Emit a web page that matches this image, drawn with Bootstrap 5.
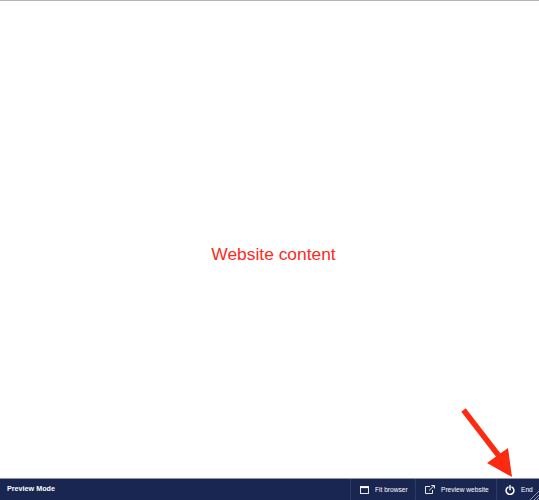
<!DOCTYPE html>
<html lang="en">
<head>
<meta charset="utf-8">
<title>Preview Mode</title>
<link href="https://cdn.jsdelivr.net/npm/bootstrap@5.3.0/dist/css/bootstrap.min.css" rel="stylesheet">
<style>
html,body{height:100%;margin:0;overflow:hidden;background:#fff;font-family:"Liberation Sans",Arial,sans-serif}
.frame{height:500px;border-top:1px solid #b4b4b4}
.site-text{color:#fb2a22;font-size:17.4px;padding-top:30px;padding-left:8px}
.bar-wrap{position:relative}
.pv-bar{height:22px;background:#1a2652;border-top:1px solid #8d93a8;color:#fff;font-size:6.6px}
.pv-title{font-size:7.2px;font-weight:700;padding-left:7px}
.pv-item{height:100%;border-left:1px solid #2f3a63;gap:6px}
.it-fit{width:65px;padding-left:9px}
.it-prev{width:81px;padding-left:9px}
.it-end{width:43px;padding-left:8px;gap:6px}
.grip{position:absolute;right:0;bottom:0}
.arrow{position:absolute;right:0;bottom:22px;pointer-events:none}
</style>
</head>
<body>
<div class="frame d-flex flex-column">
  <main class="flex-grow-1 d-flex align-items-center justify-content-center">
    <div class="site-text">Website content</div>
  </main>
  <div class="bar-wrap">
    <footer class="pv-bar d-flex align-items-center justify-content-between">
      <div class="pv-title">Preview Mode</div>
      <div class="d-flex align-items-center h-100">
        <div class="pv-item it-fit d-flex align-items-center">
          <svg width="9" height="8" viewBox="0 0 9 8" fill="none" stroke="#fff"><rect x=".5" y=".5" width="8" height="7" stroke-width=".9"/><path d="M0 1.5h9" stroke-width="1.2"/></svg>
          <span>Fit browser</span>
        </div>
        <div class="pv-item it-prev d-flex align-items-center">
          <svg width="10" height="9" viewBox="0 0 10 9" fill="none" stroke="#fff" stroke-width=".9"><path d="M5 1.5H.5v7h7V5"/><path d="M4 5.5 9 .8M6.3.5h3.2v3"/></svg>
          <span>Preview website</span>
        </div>
        <div class="pv-item it-end d-flex align-items-center">
          <svg width="10" height="10" viewBox="0 0 10 10" fill="none" stroke="#fff" stroke-width="1.5" stroke-linecap="round"><path d="M3 2.2a3.900 3.900 0 1 0 4 0"/><path d="M5 .7v4"/></svg>
          <span>End</span>
        </div>
      </div>
    </footer>
    <svg class="grip" width="9" height="9" viewBox="0 0 9 9" stroke="#aab0c2" stroke-width=".8"><path d="M0 9 9 0M4 9l5-5M7 9l2-2"/></svg>
    <svg class="arrow" width="80" height="72" viewBox="0 0 80 72"><path d="M4.500 4 40 50" stroke="#fd2a12" stroke-width="5.500" fill="none"/><path d="M53 71 49 42 28 57Z" fill="#fd2a12"/></svg>
  </div>
</div>
<script src="https://cdn.jsdelivr.net/npm/bootstrap@5.3.0/dist/js/bootstrap.bundle.min.js"></script>
</body>
</html>
